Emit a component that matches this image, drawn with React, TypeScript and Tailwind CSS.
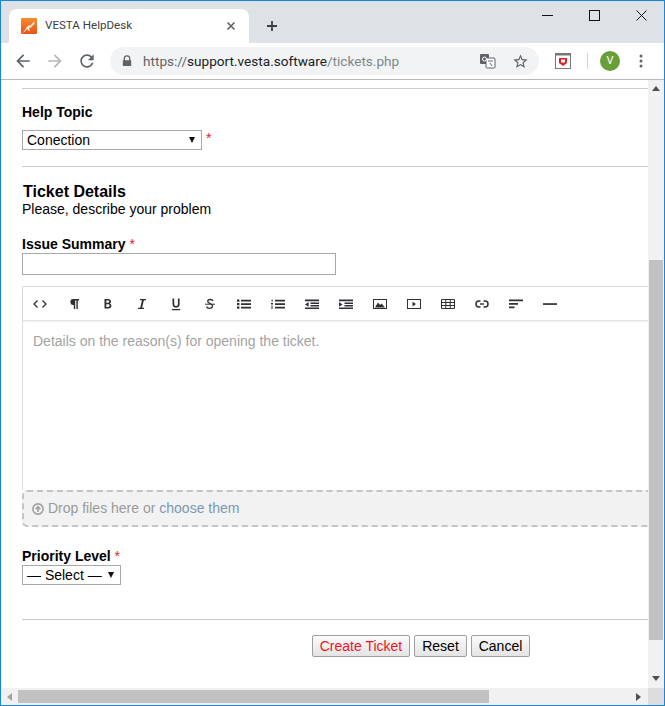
import React from 'react';

const font = { fontFamily: '"Liberation Sans", Arial, sans-serif' };

const Req = () => <span className="text-[#e0202a] font-normal"> *</span>;

const Ic = ({ children }: { children: React.ReactNode }) => (
  <svg viewBox="0 0 14 14" className="w-[14px] h-[14px]" fill="#2f2f35">{children}</svg>
);

const toolbarIcons: React.ReactNode[] = [
  <Ic key="code"><path d="M4.500 3.500 1 7l3.500 3.500M9.500 3.500 13 7l-3.500 3.500" fill="none" stroke="#2f2f35" strokeWidth="1.300" /></Ic>,
  <Ic key="par"><path d="M6 2h6v1.400h-1.200V12H9.400V3.400H8.200V12H6.800V8A3 3 0 0 1 6 2z" /></Ic>,
  <Ic key="b"><path d="M3.500 2h3.600c1.800 0 2.900.9 2.900 2.400 0 1-.5 1.700-1.300 2 1 .3 1.700 1.100 1.700 2.300 0 1.700-1.200 2.800-3.100 2.800H3.500zm1.800 1.500v2.300h1.500c.9 0 1.400-.4 1.400-1.200s-.5-1.100-1.400-1.100zm0 3.700V10h1.800c1 0 1.500-.5 1.500-1.400s-.6-1.400-1.600-1.400z" /></Ic>,
  <Ic key="i"><path d="M5 2h6v1.300H8.900L7.100 10.700H9V12H3v-1.300h2.200L7 3.300H5z" /></Ic>,
  <Ic key="u"><path d="M3.500 1.500h1.700v5.600c0 1.300.7 2 1.900 2s1.800-.7 1.800-2V1.500h1.700v5.700c0 2.200-1.400 3.400-3.500 3.400s-3.600-1.200-3.600-3.400zM2.800 12h8.400v1.200H2.800z" /></Ic>,
  <Ic key="s"><path d="M10 4C9.700 3 8.700 2.500 7.300 2.500 5.800 2.500 4.700 3.200 4.700 4.400c0 1.900 4.800 2 4.800 4.600 0 1.400-1.300 2.400-3 2.400-1.400 0-2.600-.6-3-1.900" fill="none" stroke="#2f2f35" strokeWidth="1.300" /><path d="M2 6.700h10v1H2z" /></Ic>,
  <Ic key="ul"><path d="M0 2.500h2.400v2.200H0zM0 6h2.400v2.200H0zM0 9.500h2.400v2.200H0zM4 2.800h10v1.800H4zM4 6.200h10V8H4zM4 9.700h10v1.800H4z" /></Ic>,
  <Ic key="ol"><path d="M.6 2.500h1v2.200h-1zM0 6h2v1H0zM0 7.400h2v.8H0zM0 9.500h2v.8H0zM0 10.800h2v.8H0zM4 2.800h10v1.800H4zM4 6.200h10V8H4zM4 9.700h10v1.800H4z" /></Ic>,
  <Ic key="out"><path d="M0 2.500h14v1.700H0zM5.500 5.400H14v1.700H5.500zM5.500 8h8.500v1.500H5.500zM0 10.500h14v1.600H0zM3.600 5v4.800L0 7.400z" /></Ic>,
  <Ic key="in"><path d="M0 2.500h14v1.700H0zM5.500 5.400H14v1.700H5.500zM5.500 8h8.500v1.500H5.500zM0 10.500h14v1.600H0zM0 5v4.800l3.600-2.400z" /></Ic>,
  <Ic key="img"><rect x=".5" y="2.500" width="13" height="9" fill="none" stroke="#2f2f35" /><path d="M2 10.500 5 5.500 7 8l1.500-1.500 3.500 4z" /></Ic>,
  <Ic key="vid"><rect x=".5" y="2.500" width="13" height="9" fill="none" stroke="#2f2f35" /><path d="M5.500 4.800v4.600L9 7z" /></Ic>,
  <Ic key="tab"><path d="M.5 2.500h13v9H.5zM.5 5.500h13M.5 8.500h13M4.800 2.500v9M9.200 2.500v9" fill="none" stroke="#2f2f35" /></Ic>,
  <Ic key="link"><path d="M5.500 4H4a3 3 0 0 0 0 6h1.500M8.500 4H10a3 3 0 0 1 0 6H8.500" fill="none" stroke="#2f2f35" strokeWidth="1.500" /><path d="M5 6.300h4v1.400H5z" /></Ic>,
  <Ic key="al"><path d="M0 2.500h14v1.700H0zM0 6h9v1.700H0zM0 9.500h5.500v1.700H0z" /></Ic>,
  <Ic key="hr"><path d="M0 6.200h14v1.700H0z" /></Ic>,
];

const Caret = () => (
  <svg viewBox="0 0 6 6" className="w-[6px] h-[6px] absolute right-[6px] top-[6px]" fill="#111">
    <path d="M0 0h6L3 6z" />
  </svg>
);

const Btn = ({ label, red, w }: { label: string; red?: boolean; w: string }) => (
  <button className={`${w} h-[22px] border border-[#a0a0a0] rounded-[2px] bg-gradient-to-b from-[#fbfbfb] to-[#e4e4e4] text-[14px] leading-none ${red ? 'text-[#f0141e]' : 'text-black'}`}>
    {label}
  </button>
);

const BrowserChrome = () => (
  <div className="shrink-0" style={{ fontFamily: 'Roboto, "Noto Sans", sans-serif' }}>
    <div className="h-[42px] bg-[#dee1e6] flex items-end pl-[8px] relative">
      <div className="w-[240px] h-[34px] bg-white rounded-t-[8px] flex items-center pl-[12px] pr-[10px]">
        <svg viewBox="0 0 16 16" className="w-[16px] h-[16px] shrink-0">
          <defs>
            <linearGradient id="fav" x1="0" y1="0" x2="0" y2="1">
              <stop offset="0" stopColor="#f68b2c" />
              <stop offset="1" stopColor="#e8541c" />
            </linearGradient>
          </defs>
          <rect width="16" height="16" rx="1" fill="url(#fav)" />
          <path d="M1 15c2-1 3-3 4-5 1-2 3-3 5-3 1-1 2-3 4-4l-1 2 1 1-2 1c-1 2-2 3-4 3l1 3H8L6 11c-1 2-3 3-5 4z" fill="#fde9da" />
        </svg>
        <span className="ml-[8px] text-[11.6px] text-[#3c4043] flex-1 whitespace-nowrap">VESTA HelpDesk</span>
        <svg viewBox="0 0 10 10" className="w-[10px] h-[10px] mr-[3px]"><path d="M1.500 1.500l7 7M8.500 1.500l-7 7" stroke="#5f6368" strokeWidth="1.600" /></svg>
      </div>
      <svg viewBox="0 0 12 12" className="w-[12px] h-[12px] ml-[17px] mb-[11px]"><path d="M6 1v10M1 6h10" stroke="#3c4043" strokeWidth="1.800" /></svg>
      <div className="flex-1" />
      <div className="flex self-start pt-[9px] pr-[17px] gap-[36px]">
        <svg viewBox="0 0 11 11" className="w-[11px] h-[11px]"><path d="M0 5.500h11" stroke="#111" /></svg>
        <svg viewBox="0 0 11 11" className="w-[11px] h-[11px]"><rect x=".5" y=".5" width="10" height="10" fill="none" stroke="#111" /></svg>
        <svg viewBox="0 0 11 11" className="w-[11px] h-[11px]"><path d="M.5.500l10 10M10.500.500l-10 10" stroke="#111" /></svg>
      </div>
    </div>
    <div className="h-[37px] bg-white border-b border-[#b8b8b8] flex items-center pl-[12px] pr-[12px]">
      <svg viewBox="0 0 24 24" className="w-[20px] h-[20px]" fill="#5f6368"><path d="M20 11H7.830l5.590-5.590L12 4l-8 8 8 8 1.410-1.410L7.830 13H20v-2z" /></svg>
      <svg viewBox="0 0 24 24" className="w-[20px] h-[20px] ml-[12px]" fill="#b4b7bb"><path d="M4 11h12.170l-5.590-5.590L12 4l8 8-8 8-1.410-1.410L16.170 13H4v-2z" /></svg>
      <svg viewBox="0 0 24 24" className="w-[20px] h-[20px] ml-[12px]" fill="#5f6368"><path d="M17.650 6.350C16.200 4.900 14.210 4 12 4c-4.420 0-7.990 3.580-7.990 8s3.570 8 7.990 8c3.730 0 6.840-2.550 7.730-6h-2.080c-.82 2.330-3.040 4-5.650 4-3.310 0-6-2.690-6-6s2.690-6 6-6c1.660 0 3.140.69 4.220 1.780L13 11h7V4l-2.350 2.350z" /></svg>
      <div className="ml-[13px] w-[429px] h-[28px] rounded-full bg-[#f1f3f4] flex items-center pl-[12px] pr-[10px]">
        <svg viewBox="0 0 12 14" className="w-[10px] h-[12px] shrink-0" fill="#5f6368"><path d="M2 6V4a4 4 0 0 1 8 0v2h1v7H1V6zm1.500 0h5V4a2.500 2.500 0 0 0-5 0z" /></svg>
        <span className="ml-[11px] text-[13.6px] whitespace-nowrap flex-1"><span className="text-[#5f6368]">https://</span><span className="text-[#202124]">support.vesta.software</span><span className="text-[#80868b]">/tickets.php</span></span>
        <svg viewBox="0 0 16 16" className="w-[16px] h-[16px]">
          <rect x="0" y="1" width="9" height="10" rx="1" fill="#5f6368" />
          <rect x="6" y="5" width="9" height="10" rx="1" fill="#fff" stroke="#5f6368" />
          <circle cx="4.500" cy="6" r="2" fill="none" stroke="#fff" />
          <path d="M8 8h5M10 10l2 3" stroke="#5f6368" />
        </svg>
        <svg viewBox="0 0 24 24" className="w-[17px] h-[17px] ml-[16px]" fill="#5f6368"><path d="M22 9.240l-7.190-.62L12 2 9.190 8.630 2 9.240l5.460 4.730L5.820 21 12 17.270 18.180 21l-1.630-7.030L22 9.240zM12 15.400l-3.760 2.270 1-4.280-3.320-2.880 4.380-.38L12 6.100l1.710 4.040 4.380.38-3.320 2.880 1 4.280L12 15.400z" /></svg>
      </div>
      <svg viewBox="0 0 16 16" className="w-[16px] h-[16px] ml-[16px]">
        <rect x=".5" y=".5" width="15" height="15" fill="#fff" stroke="#777" />
        <path d="M.5.500h15v2H.5z" fill="#777" />
        <path d="M4 5h8v5l-4 3-4-3z" fill="#d8232a" />
        <path d="M6 6.500h4v3H6z" fill="#fff" />
      </svg>
      <div className="w-px h-[16px] bg-[#d5d5d5] ml-[16px]" />
      <div className="w-[20px] h-[20px] rounded-full bg-[#689f38] text-white text-[11px] flex items-center justify-center ml-[12px]">V</div>
      <svg viewBox="0 0 4 14" className="w-[4px] h-[14px] ml-[19px]" fill="#5f6368"><circle cx="2" cy="2" r="1.500" /><circle cx="2" cy="7" r="1.500" /><circle cx="2" cy="12" r="1.500" /></svg>
    </div>
  </div>
);

const Form = () => (
  <main className="flex-1 min-w-0 overflow-hidden bg-white pl-[21px] text-black text-[14px]" style={font}>
    <div className="w-[700px] pt-[8px]">
      <div className="border-t border-[#cccccc]" />
      <div className="font-bold leading-[16px] mt-[15px]">Help Topic</div>
      <div className="flex mt-[10px]">
        <div className="relative w-[180px] h-[20px] border border-[#a9a9a9] bg-white pl-[4px] leading-[18px]">
          Conection
          <Caret />
        </div>
        <span className="text-[#e0202a] ml-[4px] leading-[16px]">*</span>
      </div>
      <div className="border-t border-[#cccccc] mt-[16px]" />
      <div className="font-bold text-[16px] leading-[18px] mt-[16px] ml-px">Ticket Details</div>
      <div className="leading-[16px]">Please, describe your problem</div>
      <div className="font-bold leading-[16px] mt-[19px]">Issue Summary<Req /></div>
      <div className="w-[314px] h-[22px] border border-[#a9a9a9] mt-[1px]" />
      <div className="mt-[11px] w-[700px] border-x border-t border-[#dddddd]">
        <div className="h-[34px] border-b border-[#e4e4e4] shadow-[0_1px_2px_rgba(0,0,0,.06)] flex items-center gap-[20px] pl-[10px]">
          {toolbarIcons}
        </div>
        <div className="h-[169px] pt-[12px] pl-[10px] leading-[16px] text-[#a3a3a3]">Details on the reason(s) for opening the ticket.</div>
      </div>
      <div className="h-[37px] w-[700px] border-2 border-dashed border-[#c4c4c4] rounded-[5px] bg-[#f2f2f2] flex items-center pl-[8px] text-[#9a9a9a]">
        <svg viewBox="0 0 14 14" className="w-[12px] h-[12px] mr-[4px]">
          <circle cx="7" cy="7" r="6" fill="none" stroke="#a0a0a0" strokeWidth="1.800" />
          <path d="M7 10.500V5M4.300 7.200 7 4.300l2.700 2.900" fill="none" stroke="#a0a0a0" strokeWidth="1.800" />
        </svg>
        Drop files here or&nbsp;<span className="text-[#7c98b3]">choose them</span>
      </div>
      <div className="font-bold leading-[16px] mt-[21px]">Priority Level<Req /></div>
      <div className="relative w-[99px] h-[20px] border border-[#a9a9a9] pl-[4px] leading-[18px] mt-px">
        — Select —
        <Caret />
      </div>
      <div className="border-t border-[#cccccc] mt-[34px]" />
      <div className="flex gap-[4px] mt-[15px] ml-[290px]">
        <Btn label="Create Ticket" red w="w-[98px]" />
        <Btn label="Reset" w="w-[53px]" />
        <Btn label="Cancel" w="w-[59px]" />
      </div>
    </div>
  </main>
);

const VScroll = () => (
  <div className="w-[16px] shrink-0 bg-[#f1f1f1] flex flex-col items-center">
    <svg viewBox="0 0 8 5" className="w-[8px] h-[5px] mt-[6px]" fill="#505050"><path d="M0 5l4-5 4 5z" /></svg>
    <div className="w-[14px] h-[380px] bg-[#c1c1c1] mt-[169px]" />
    <svg viewBox="0 0 8 5" className="w-[8px] h-[5px] mt-[36px]" fill="#505050"><path d="M0 0l4 5 4-5z" /></svg>
  </div>
);

const HScroll = () => (
  <div className="h-[17px] shrink-0 flex bg-[#f1f1f1]">
    <div className="flex-1 flex items-center">
      <svg viewBox="0 0 5 8" className="w-[5px] h-[8px] ml-[6px]" fill="#a3a3a3"><path d="M5 0 0 4l5 4z" /></svg>
      <div className="w-[471px] h-[13px] bg-[#c1c1c1] ml-[6px]" />
      <div className="flex-1" />
      <svg viewBox="0 0 5 8" className="w-[5px] h-[8px] mr-[7px]" fill="#505050"><path d="M0 0l5 4-5 4z" /></svg>
    </div>
    <div className="w-[16px] bg-[#dcdcdc]" />
  </div>
);

export default function App() {
  return (
    <div className="w-[665px] h-[706px] border border-[#1a86d8] flex flex-col overflow-hidden bg-white">
      <BrowserChrome />
      <div className="flex-1 flex min-h-0">
        <Form />
        <VScroll />
      </div>
      <HScroll />
    </div>
  );
}
